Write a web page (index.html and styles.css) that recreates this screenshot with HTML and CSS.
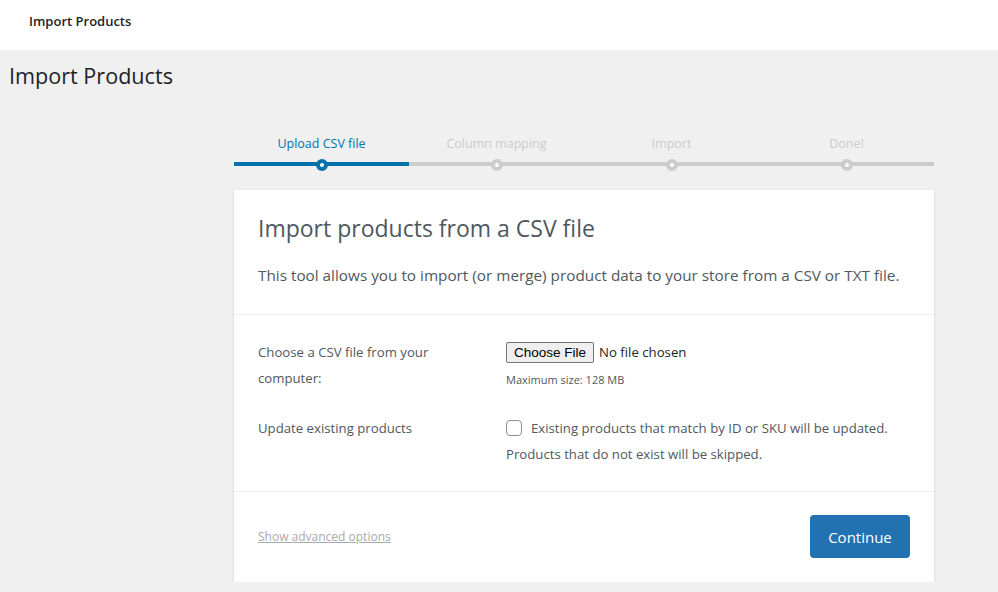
FILE: index.html
```html
<!DOCTYPE html>
<html lang="en">
<head>
    <meta charset="UTF-8">
    <meta name="viewport" content="width=device-width, initial-scale=1.0">
    <title>Import Products</title>
    <link rel="stylesheet" href="styles.css">
</head>
<body>
<div class="topbar">Import Products</div>
<h1 class="page-title">Import Products</h1>
<div class="importer">
    <ol class="steps">
        <li class="active">Upload CSV file</li>
        <li>Column mapping</li>
        <li>Import</li>
        <li>Done!</li>
    </ol>
    <form class="card">
        <header class="card-head">
            <h2>Import products from a CSV file</h2>
            <p>This tool allows you to import (or merge) product data to your store from a CSV or TXT file.</p>
        </header>
        <section class="card-body">
            <div class="row">
                <label class="row-label" for="upload">Choose a CSV file from your computer:</label>
                <div class="row-field">
                    <div class="file-line">
                        <span class="file-btn">Choose File</span>
                        <span class="file-name">No file chosen</span>
                    </div>
                    <small class="hint">Maximum size: 128 MB</small>
                </div>
            </div>
            <div class="row">
                <label class="row-label" for="update">Update existing products</label>
                <div class="row-field">
                    <label class="check"><span class="box"></span>Existing products that match by ID or SKU will be updated.</label>
                    <div class="check-note">Products that do not exist will be skipped.</div>
                </div>
            </div>
        </section>
        <footer class="card-foot">
            <a href="#" class="advanced">Show advanced options</a>
            <button type="button" class="continue">Continue</button>
        </footer>
    </form>
</div>
</body>
</html>
```
FILE: styles.css
```css
body {
    margin: 0;
    background: #f0f0f1;
    font-family: "Open Sans", "Noto Sans", sans-serif;
    color: #50575e;
}
.topbar {
    background: #fff;
    height: 50px;
    box-sizing: border-box;
    padding: 12px 29px 0;
    font-size: 13px;
    font-weight: 600;
    color: #1d2327;
    line-height: 18px;
}
.page-title {
    margin: 0;
    padding: 11px 9px 0;
    font-size: 21.6px;
    font-weight: 400;
    line-height: 29px;
    color: #1d2327;
}
.importer {
    width: 700px;
    margin: 45px 0 0 234px;
}
.steps {
    display: flex;
    list-style: none;
    margin: 0 0 24px;
    padding: 0;
}
.steps li {
    flex: 1;
    position: relative;
    text-align: center;
    font-size: 12.5px;
    line-height: 18px;
    color: #ccc;
    padding-bottom: 9px;
    border-bottom: 4px solid #ccc;
}
.steps li::before {
    content: "";
    position: absolute;
    left: 50%;
    bottom: -9px;
    width: 4px;
    height: 4px;
    margin-left: -6px;
    background: #fff;
    border: 4px solid #ccc;
    border-radius: 50%;
}
.steps li.active {
    color: #0073aa;
    border-bottom-color: #0073aa;
}
.steps li.active::before {
    border-color: #0073aa;
}
.card {
    background: #fff;
    box-shadow: 0 1px 3px rgba(0, 0, 0, 0.13);
    margin: 0;
}
.card-head {
    padding: 23px 24px 0;
    border-bottom: 1px solid #eee;
}
.card-head h2 {
    margin: 0 0 20px;
    font-size: 23px;
    font-weight: 400;
    line-height: 30px;
    color: #50575e;
}
.card-head p {
    margin: 0 0 27px;
    font-size: 15.3px;
    line-height: 24px;
}
.card-body {
    padding: 24px 24px 10px;
    border-bottom: 1px solid #eee;
}
.row {
    display: flex;
    margin-bottom: 24px;
}
.row:last-child {
    margin-bottom: 14px;
}
.row-label {
    width: 248px;
    flex-shrink: 0;
    padding-right: 60px;
    box-sizing: border-box;
    font-size: 13.2px;
    line-height: 26px;
}
.row-field {
    font-size: 13.2px;
    line-height: 26px;
}
.file-line {
    display: flex;
    align-items: center;
    height: 26px;
}
.file-btn {
    font-family: "Liberation Sans", Arial, sans-serif;
    font-size: 13.5px;
    color: #000;
    background: #efefef;
    border: 1px solid #767676;
    border-radius: 2px;
    padding: 0 7px;
    line-height: 19px;
    margin-right: 5px;
}
.file-name {
    color: #1d2327;
}
.hint {
    display: block;
    margin-top: 7px;
    font-size: 11px;
    line-height: 16px;
}
.check {
    display: flex;
    align-items: center;
}
.box {
    width: 14px;
    height: 14px;
    border: 1px solid #8c8f94;
    border-radius: 4px;
    margin-right: 9px;
}
.card-foot {
    display: flex;
    justify-content: space-between;
    align-items: center;
    padding: 23px 24px 24px;
}
.advanced {
    font-size: 12px;
    color: #a7aaad;
}
.continue {
    font-family: inherit;
    font-size: 15px;
    color: #fff;
    background: #2271b1;
    border: none;
    border-radius: 4px;
    width: 100px;
    height: 43px;
}
```
